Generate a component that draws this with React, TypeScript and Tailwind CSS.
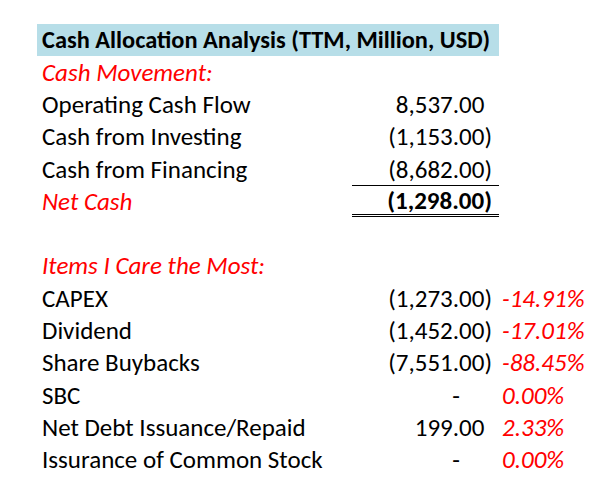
import React from "react";

type Row = {
  label?: string;
  labelStyle?: "normal" | "redItalic";
  value?: string;
  valueKind?: "pos" | "neg" | "dash";
  bold?: boolean;
  pct?: string;
  net?: boolean;
};

const rows: Row[] = [
  { label: "Cash Movement:", labelStyle: "redItalic" },
  { label: "Operating Cash Flow", value: "8,537.00", valueKind: "pos" },
  { label: "Cash from Investing", value: "(1,153.00)", valueKind: "neg" },
  { label: "Cash from Financing", value: "(8,682.00)", valueKind: "neg" },
  { label: "Net Cash", labelStyle: "redItalic", value: "(1,298.00)", valueKind: "neg", bold: true, net: true },
  {},
  { label: "Items I Care the Most:", labelStyle: "redItalic" },
  { label: "CAPEX", value: "(1,273.00)", valueKind: "neg", pct: "-14.91%" },
  { label: "Dividend", value: "(1,452.00)", valueKind: "neg", pct: "-17.01%" },
  { label: "Share Buybacks", value: "(7,551.00)", valueKind: "neg", pct: "-88.45%" },
  { label: "SBC", value: "-", valueKind: "dash", pct: "0.00%" },
  { label: "Net Debt Issuance/Repaid", value: "199.00", valueKind: "pos", pct: "2.33%" },
  { label: "Issurance of Common Stock", value: "-", valueKind: "dash", pct: "0.00%" },
];

function Value({ r }: { r: Row }) {
  if (!r.value) return null;
  if (r.valueKind === "dash") {
    return <span className="pr-[32px]">-</span>;
  }
  if (r.valueKind === "pos") {
    return (
      <span>
        {r.value}
        <span className="invisible">)</span>
      </span>
    );
  }
  return <span>{r.value}</span>;
}

export default function App() {
  return (
    <div
      className="w-[609px] h-[503px] bg-white text-black pl-[37px] pt-[24px] overflow-hidden"
      style={{ fontFamily: "Carlito, Lato, 'Liberation Sans', sans-serif" }}
    >
      <div className="grid grid-cols-[315px_147px_110px] text-[25px] leading-none">
        <div className="col-span-2 h-[32px] bg-[#b7dee8] flex items-center pl-[5px] font-bold whitespace-nowrap text-[24.4px]">
          Cash Allocation Analysis (TTM, Million, USD)
        </div>
        <div className="h-[32px]" />
        {rows.map((r, i) => (
          <React.Fragment key={i}>
            <div
              className={
                "h-[32.3px] flex items-center pl-[5px] whitespace-nowrap " +
                (r.labelStyle === "redItalic" ? "italic text-[#ff0000]" : "")
              }
            >
              {r.label}
            </div>
            <div
              className={
                "h-[32.3px] flex items-center justify-end pr-[7px] whitespace-nowrap " +
                (r.bold ? "font-bold " : "") +
                (r.net ? "border-t border-black border-b-[3px] border-b-black" : "")
              }
              style={r.net ? { borderTopStyle: "solid", borderBottomStyle: "double" } : undefined}
            >
              <Value r={r} />
            </div>
            <div className="h-[32.3px] flex items-center pl-[3px] italic text-[#ff0000] whitespace-nowrap">
              {r.pct}
            </div>
          </React.Fragment>
        ))}
      </div>
    </div>
  );
}
